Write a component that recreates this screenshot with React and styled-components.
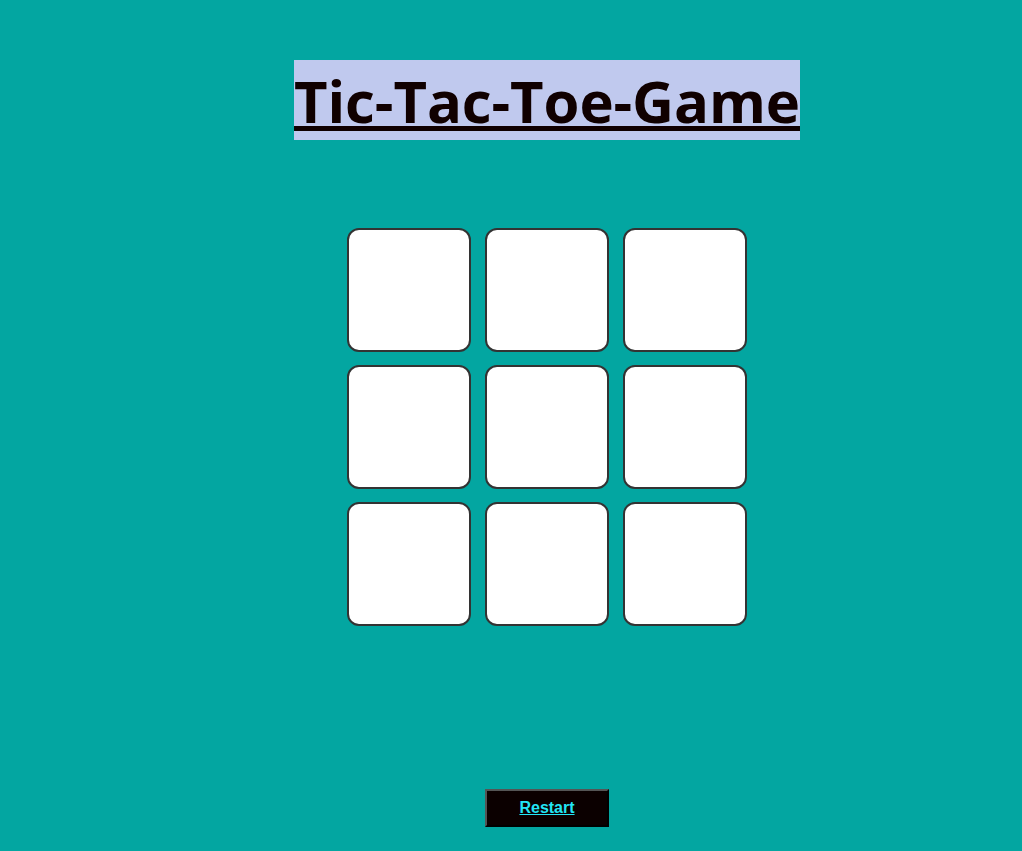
import React, { useState } from "react";
import styled, { createGlobalStyle } from "styled-components";

const GlobalStyle = createGlobalStyle`
  html, body {
    margin: 0;
    padding: 0;
    background: #03a6a1;
  }
`;

const Page = styled.div`
  min-height: 851px;
  display: flex;
  flex-direction: column;
  align-items: center;
  padding: 60px 0 0 72px;
  box-sizing: border-box;
`;

const Title = styled.h1`
  margin: 0;
  display: inline-block;
  box-sizing: border-box;
  background: #c0c9ee;
  color: #100000;
  font-family: "Open Sans", "Noto Sans", sans-serif;
  font-weight: 700;
  font-size: 58px;
  line-height: 78px;
  height: 80px;
  padding-top: 2px;
  letter-spacing: -0.1px;
  text-decoration: underline;
  text-decoration-thickness: 5px;
  text-underline-offset: 3px;
`;

const Board = styled.div`
  margin-top: 88px;
  display: grid;
  grid-template-columns: repeat(3, 124px);
  grid-auto-rows: 124px;
  gap: 13px 14px;
`;

const Cell = styled.button`
  width: 124px;
  height: 124px;
  box-sizing: border-box;
  border: 2px solid #333;
  border-radius: 12px;
  background: #fff;
  padding: 0;
  font-family: "Liberation Sans", Arial, sans-serif;
  font-size: 64px;
  font-weight: 700;
  color: #100000;
  cursor: pointer;
`;

const RestartButton = styled.button`
  margin-top: 163px;
  width: 124px;
  height: 38px;
  box-sizing: border-box;
  background: #0b0000;
  border: 2px outset #555;
  color: #22e6f6;
  font-family: "Liberation Sans", Arial, sans-serif;
  font-size: 16px;
  font-weight: 700;
  text-decoration: underline;
  cursor: pointer;
`;

const App = () => {
  const [cells, setCells] = useState(Array(9).fill(""));
  const [turn, setTurn] = useState("X");

  const play = (i) => {
    if (cells[i]) return;
    const next = [...cells];
    next[i] = turn;
    setCells(next);
    setTurn(turn === "X" ? "O" : "X");
  };

  return (
    <>
      <GlobalStyle />
      <Page>
        <Title>Tic-Tac-Toe-Game</Title>
        <Board>
          {cells.map((c, i) => (
            <Cell key={i} onClick={() => play(i)}>
              {c}
            </Cell>
          ))}
        </Board>
        <RestartButton onClick={() => setCells(Array(9).fill(""))}>
          Restart
        </RestartButton>
      </Page>
    </>
  );
};

export default App;
